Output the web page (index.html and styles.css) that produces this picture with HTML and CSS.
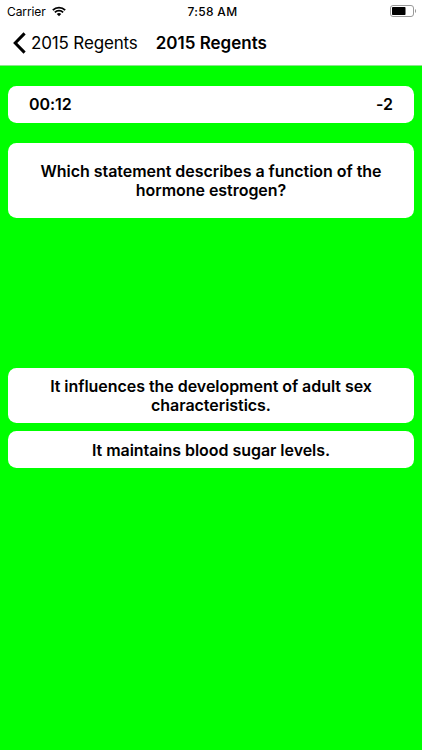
FILE: index.html
```html
<!DOCTYPE html>
<html lang="en">
<head>
  <meta charset="UTF-8">
  <meta name="viewport" content="width=device-width, initial-scale=1.0">
  <title>2015 Regents</title>
  <link rel="stylesheet" href="styles.css">
</head>
<body>
  <header>
    <div class="status-bar">
      <div class="carrier">
        <span class="carrier-name">Carrier</span>
        <svg class="wifi" width="14" height="11" viewBox="0 0 15 11">
          <path d="M0.9 4a9.4 9.4 0 0 1 13.2 0M3.1 6.4a6.2 6.2 0 0 1 8.8 0" fill="none" stroke="#000" stroke-width="2"/>
          <path d="M5.1 8.3a3.4 3.4 0 0 1 4.8 0L7.5 10.7z"/>
        </svg>
      </div>
      <span class="clock">7:58 AM</span>
      <svg class="battery" width="27" height="12" viewBox="0 0 27 12">
        <rect x="0.5" y="0.5" width="23" height="11" rx="2.5" fill="none" stroke="#999"/>
        <rect x="2" y="2" width="13.5" height="8" rx="0.8"/>
        <path d="M25 4v4a2.4 2.4 0 0 0 0-4z" fill="#999"/>
      </svg>
    </div>
    <nav class="nav-bar">
      <svg class="chevron" width="14" height="22" viewBox="0 0 14 22">
        <path d="M11.6 1.4L2.2 11l9.4 9.6" fill="none" stroke="#000" stroke-width="3"/>
      </svg>
      <span class="back">2015 Regents</span>
      <h1 class="title">2015 Regents</h1>
    </nav>
  </header>

  <main>
    <div class="card score-bar">
      <span class="timer">00:12</span>
      <span class="score">-2</span>
    </div>
    <div class="card question">Which statement describes a function of the<br>hormone estrogen?</div>
    <div class="answers">
      <div class="card answer tall">It influences the development of adult sex<br>characteristics.</div>
      <div class="card answer">It maintains blood sugar levels.</div>
    </div>
  </main>
</body>
</html>
```

FILE: styles.css
```css
* {
  box-sizing: border-box;
}

body {
  margin: 0;
  height: 750px;
  background: #00ff00;
  color: #000;
  font-family: Inter, sans-serif;
  overflow: hidden;
}

header {
  height: 66px;
  background: #fff;
  border-bottom: 1px solid #8ce68c;
}

.status-bar {
  display: grid;
  grid-template-columns: 1fr auto 1fr;
  align-items: center;
  height: 22px;
  padding: 0 5px 0 7px;
}

.carrier {
  display: flex;
  align-items: center;
  gap: 6px;
}

.carrier-name {
  font-size: 12px;
  letter-spacing: -0.1px;
}

.clock {
  padding-left: 1px;
  font-size: 12px;
  font-weight: 500;
  letter-spacing: 0.3px;
}

.battery {
  justify-self: end;
  margin-top: -1px;
}

.nav-bar {
  display: flex;
  align-items: center;
  height: 42px;
  padding-left: 13px;
}

.back {
  margin-left: 4px;
  font-size: 17px;
  letter-spacing: -0.15px;
}

.title {
  margin: 0 0 0 18px;
  font-size: 17px;
  font-weight: 600;
}

main {
  padding: 20px 8.4px;
}

.card {
  background: #fff;
  border-radius: 8.5px;
  font-size: 16px;
  font-weight: 600;
  line-height: 19px;
  letter-spacing: -0.04px;
  text-align: center;
}

.score-bar {
  display: flex;
  justify-content: space-between;
  align-items: center;
  height: 36.6px;
  padding: 0 20.6px;
}

.question {
  display: flex;
  flex-direction: column;
  justify-content: center;
  height: 75px;
  margin-top: 20.4px;
  padding-top: 1px;
}

.answers {
  display: flex;
  flex-direction: column;
  gap: 8px;
  margin-top: 150px;
}

.answer {
  display: flex;
  flex-direction: column;
  justify-content: center;
  height: 36.6px;
  padding-top: 1px;
}

.tall {
  height: 55.4px;
  padding-top: 0;
}
```
